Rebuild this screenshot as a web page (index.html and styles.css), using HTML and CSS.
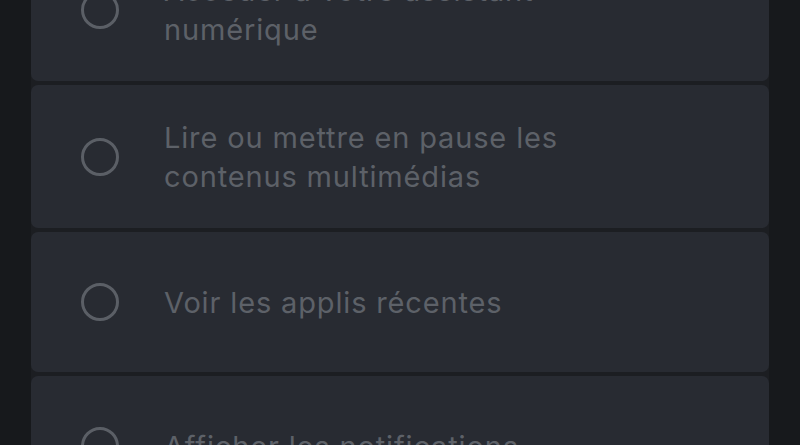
FILE: index.html
```html
<!DOCTYPE html>
<html lang="fr">
<head>
<meta charset="utf-8">
<title>Gestes</title>
<link rel="stylesheet" href="styles.css">
</head>
<body>
<div class="viewport">
  <ul class="options">
    <li class="option"><span class="radio"></span><span class="label">Accéder à votre assistant<br>numérique</span></li>
    <li class="option"><span class="radio"></span><span class="label">Lire ou mettre en pause les<br>contenus multimédias</span></li>
    <li class="option"><span class="radio"></span><span class="label">Voir les applis récentes</span></li>
    <li class="option"><span class="radio"></span><span class="label">Afficher les notifications</span></li>
  </ul>
</div>
</body>
</html>
```
FILE: styles.css
```css
html, body {
  margin: 0;
  padding: 0;
  background: #17191c;
  overflow: hidden;
}
.viewport {
  width: 800px;
  height: 445px;
  overflow: hidden;
  padding: 0 31px;
  box-sizing: border-box;
}
.options {
  list-style: none;
  margin: -62px 0 0 0;
  padding: 0;
  display: flex;
  flex-direction: column;
  gap: 4px;
  background: #1c1e22;
}
.option {
  display: flex;
  align-items: center;
  min-height: 140px;
  box-sizing: border-box;
  padding: 32.5px 0 32.5px 50px;
  background: #282b32;
  border-radius: 7px;
}
.radio {
  flex: none;
  width: 38px;
  height: 38px;
  box-sizing: border-box;
  border: 3px solid #5b5f66;
  border-radius: 50%;
}
.label {
  margin-left: 45px;
  font-family: Inter, "Open Sans", sans-serif;
  font-size: 29px;
  line-height: 39px;
  letter-spacing: 0.85px;
  color: #5d6168;
}
```
